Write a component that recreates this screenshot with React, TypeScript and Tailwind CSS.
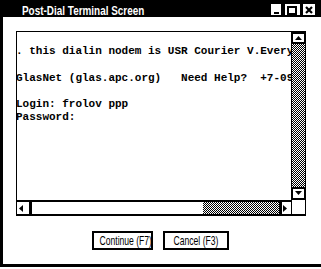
import React from "react";

const lines = [
  "",
  ". this dialin nodem is USR Courier V.Everything",
  "",
  "GlasNet (glas.apc.org)   Need Help?  +7-095-262-0852",
  "",
  "Login: frolov ppp",
  "Password:",
];

function Tri({ dir }: { dir: "up" | "down" | "left" | "right" }) {
  if (dir === "up")
    return (
      <svg width="7" height="4" viewBox="0 0 7 4" className="block">
        <polygon points="3.5,0 7,4 0,4" fill="#000" />
      </svg>
    );
  if (dir === "down")
    return (
      <svg width="7" height="4" viewBox="0 0 7 4" className="block">
        <polygon points="0,0 7,0 3.5,4" fill="#000" />
      </svg>
    );
  if (dir === "left")
    return (
      <svg width="4" height="7" viewBox="0 0 4 7" className="block">
        <polygon points="4,0 4,7 0,3.5" fill="#000" />
      </svg>
    );
  return (
    <svg width="4" height="7" viewBox="0 0 4 7" className="block">
      <polygon points="0,0 4,3.5 0,7" fill="#000" />
    </svg>
  );
}

const checker =
  "bg-[repeating-conic-gradient(#000_0_25%,#fff_0_50%)] bg-[length:2px_2px]";

export default function App() {
  return (
    <div className="w-[321px] h-[269px] bg-black overflow-hidden flex flex-col">
      {/* Title bar */}
      <div className="h-[17px] w-[321px] bg-black flex flex-row items-start shrink-0">
        <div className="ml-[22px] mt-[4px] h-[13px] w-[124px] shrink-0 overflow-hidden">
          <div className="w-[163px] origin-top-left scale-x-[0.764] whitespace-nowrap text-white font-bold text-[13px] leading-[13px] font-['Liberation_Sans',Arial,sans-serif]">
            Post-Dial Terminal Screen
          </div>
        </div>
        <div className="flex-1" />
        <div className="flex items-start pt-[4px] pr-[6px] h-[17px]">
          <div className="w-[10px] h-[11px] bg-white flex items-end pl-[3px] pb-[1px]">
            <div className="w-[5px] h-[2px] bg-black" />
          </div>
          <div className="ml-[4px] w-[15px] h-[11px] bg-white flex items-end pl-[2px]">
            <div className="w-[10px] h-[9px] border-2 border-black" />
          </div>
          <div className="ml-[3px] w-[12px] h-[11px] bg-white flex items-center justify-center">
            <svg width="8" height="8" viewBox="0 0 8 8" className="block">
              <path d="M1 1 L7 7 M7 1 L1 7" stroke="#000" strokeWidth="2.2" />
            </svg>
          </div>
        </div>
      </div>

      {/* Body */}
      <div className="h-[250px] shrink-0 bg-white border-l-[3px] border-b-[3px] border-black flex flex-col">
        {/* Terminal */}
        <div className="ml-[13px] mt-[14px] w-[290px] h-[185px] shrink-0 border-t border-l border-black grid grid-cols-[274px_15px] grid-rows-[168px_16px]">
          <div className="overflow-hidden bg-white">
            <div className="ml-[-1px] whitespace-pre font-bold text-[11px] leading-[13.2px] text-black font-['Liberation_Mono','Courier_New',monospace]">
              {lines.map((l, i) => (
                <div key={i} className="h-[13.2px]">
                  {l}
                </div>
              ))}
            </div>
          </div>
          {/* vertical scrollbar */}
          <div className="flex flex-col">
            <div className="h-[12px] shrink-0 border-2 border-black bg-white flex justify-center pt-[2px]">
              <Tri dir="up" />
            </div>
            <div className={`flex-1 border-x border-black ${checker}`} />
            <div className="h-[13px] shrink-0 border-2 border-black bg-white flex justify-center pt-[2px]">
              <Tri dir="down" />
            </div>
          </div>
          {/* horizontal scrollbar */}
          <div className="border-y-2 border-black flex">
            <div className="w-[15px] shrink-0 border-r-[3px] border-black bg-white flex items-center pl-[2px]">
              <Tri dir="left" />
            </div>
            <div className="w-[171px] shrink-0 bg-white" />
            <div className={`w-[76px] shrink-0 ${checker}`} />
            <div className="w-[12px] shrink-0 border-l-[3px] border-black bg-white flex items-center pl-[1px]">
              <Tri dir="right" />
            </div>
          </div>
          <div className="bg-white border-l border-r border-b-2 border-black" />
        </div>

        {/* Buttons */}
        <div className="mt-[15px] flex shrink-0">
          <div className="ml-[89px] w-[61px] h-[19px] border-2 border-black bg-white overflow-hidden flex justify-center pl-[7px]">
            <span className="inline-block shrink-0 origin-center scale-x-[0.66] whitespace-nowrap text-[13px] leading-[15px] text-black font-['Liberation_Sans',Arial,sans-serif]">
              Continue (F7)
            </span>
          </div>
          <div className="ml-[10px] w-[66px] h-[19px] border-2 border-black bg-white overflow-hidden flex justify-center">
            <span className="inline-block shrink-0 origin-center scale-x-[0.66] whitespace-nowrap text-[13px] leading-[15px] text-black font-['Liberation_Sans',Arial,sans-serif]">
              Cancel (F3)
            </span>
          </div>
        </div>
      </div>
      <div className="flex-1 bg-white" />
    </div>
  );
}
